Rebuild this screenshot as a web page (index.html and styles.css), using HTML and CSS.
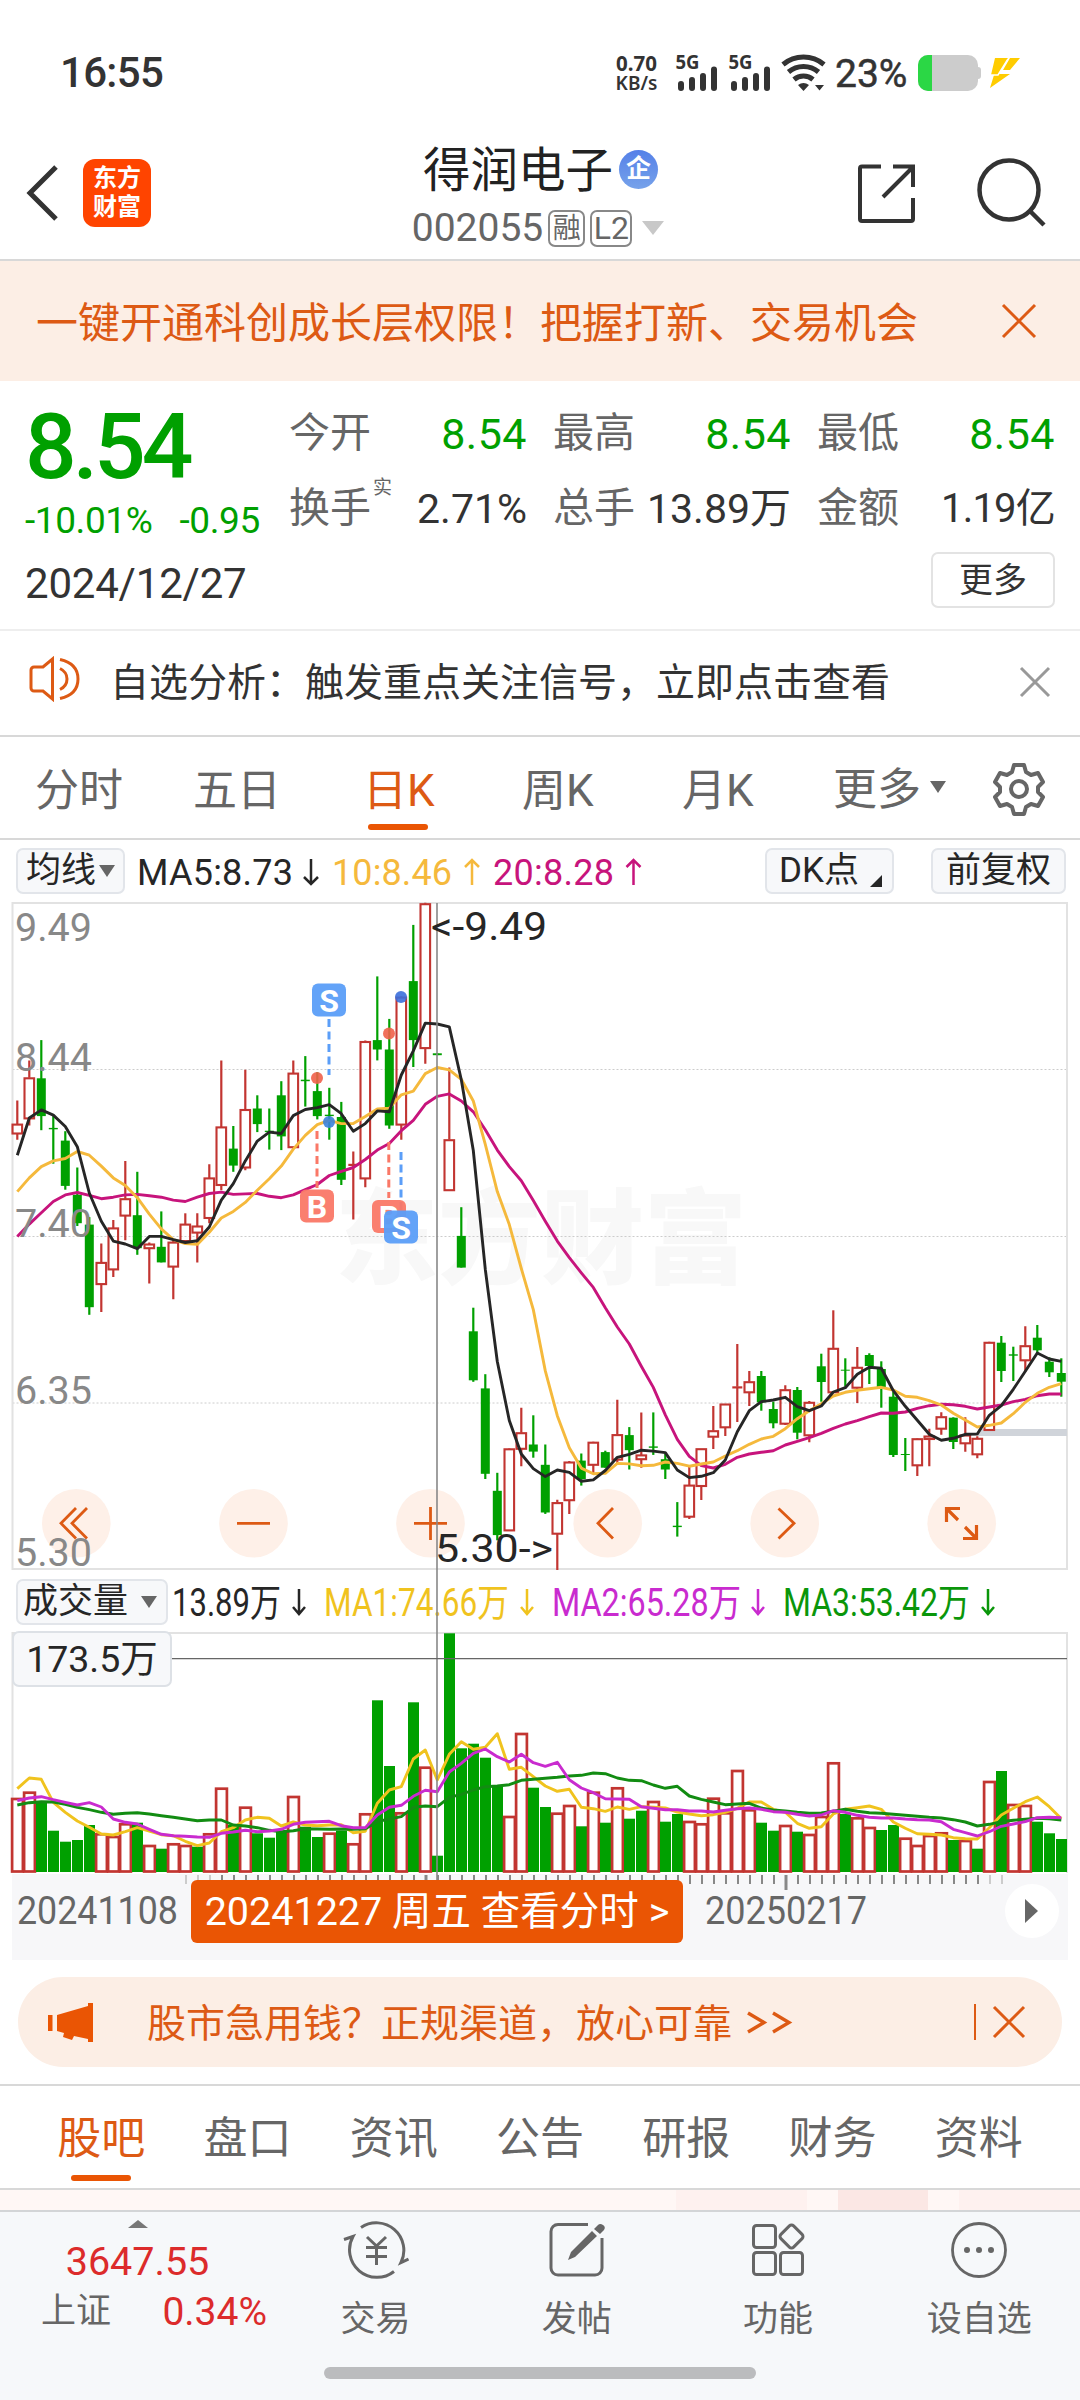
FILE: index.html
```html
<!DOCTYPE html>
<html lang="zh-CN">
<head>
<meta charset="utf-8">
<title>得润电子 002055</title>
<link rel="stylesheet" href="styles.css">
</head>
<body>
<div class="statusbar">
  <span class="clock">16:55</span>
  <div class="net-speed"><span>0.70</span><span>KB/s</span></div>
  <svg class="signals" width="96" height="48" viewBox="674 45 96 48">
    <g class="signal-label"><text x="675.500" y="69" textLength="24" lengthAdjust="spacingAndGlyphs">5G</text><text x="728.500" y="69" textLength="24" lengthAdjust="spacingAndGlyphs">5G</text></g>
    <g class="signal-bars"><path d="M681 84v4M692 80v8M703 76v12M714 69.500v18.500M734 84v4M745 80v8M756 76v12M767 69.500v18.500"/></g>
  </svg>
  <svg class="wifi" width="46" height="38" viewBox="780 54 46 38">
    <path d="M783 64.500a32 32 0 0 1 41 0M788.500 72a23 23 0 0 1 30 0M794 79.500a14.500 14.500 0 0 1 19 0" fill="none" stroke="#333" stroke-width="5"/>
    <path d="M798 85q5.500-4 11 0l-5.500 6zM815 85h9l-4.500 5.500z" fill="#333"/>
  </svg>
  <span class="battery-pct">23%</span>
  <svg class="battery" width="104" height="38" viewBox="917 54 104 38">
    <rect x="918" y="55" width="60" height="36" rx="10" fill="#ccc"/><path d="M978 67q3 0 3 3v6q0 3-3 3z" fill="#ccc"/>
    <path d="M932 55h-4a10 10 0 0 0-10 10v16a10 10 0 0 0 10 10h4z" fill="#2bd745"/>
    <path d="M995 58h13l-9 16h11l-20 14 4-13h-3zM1010 58h10l-10 12h-7z" fill="#fc0"/><path d="M1008 59 998 75h-7" fill="none" stroke="#fff" stroke-width="1.500"/>
  </svg>
</div>

<header class="header">
  <div class="header-left">
    <svg width="34" height="58" viewBox="0 0 34 58"><path d="M30 3 4 29 30 55" fill="none" stroke="#333" stroke-width="5"/></svg>
    <div class="logo"><span>东方</span><span>财富</span></div>
  </div>
  <div class="header-title">
    <div class="name-row"><span class="name">得润电子</span><span class="corp">企</span></div>
    <div class="code-row"><span class="code">002055</span><span class="tag">融</span><span class="tag tag-l2">L2</span><i class="caret"></i></div>
  </div>
  <div class="header-right">
    <svg width="60" height="60" viewBox="857 164 60 60"><path d="M881 166.500H862a2 2 0 0 0-2 2V219a2 2 0 0 0 2 2h49a2 2 0 0 0 2-2V198M893 166.500h20V187M912 168l-29 29" fill="none" stroke="#333" stroke-width="4"/></svg>
    <svg width="72" height="72" viewBox="976 157 72 72"><circle cx="1009" cy="190" r="29.500" fill="none" stroke="#333" stroke-width="4.500"/><path d="M1030 211l14 14" stroke="#333" stroke-width="4.500"/></svg>
  </div>
</header>

<div class="banner"><span>一键开通科创成长层权限！把握打新、交易机会</span>
  <svg width="36" height="36" viewBox="0 0 36 36"><path d="M2 2 34 34M34 2 2 34" stroke="#dd5a14" stroke-width="3"/></svg>
</div>

<section class="quote">
  <div class="quote-price">
    <div class="price">8.54</div>
    <div class="change"><span>-10.01%</span><span>-0.95</span></div>
  </div>
  <div class="quote-grid">
    <div class="cell"><label>今开</label><b class="down">8.54</b></div>
    <div class="cell"><label>最高</label><b class="down">8.54</b></div>
    <div class="cell"><label>最低</label><b class="down">8.54</b></div>
    <div class="cell"><label>换手<sup>实</sup></label><b>2.71%</b></div>
    <div class="cell"><label>总手</label><b>13.89万</b></div>
    <div class="cell"><label>金额</label><b class="amount">1.19亿</b></div>
  </div>
  <div class="quote-date">2024/12/27</div>
  <button class="more">更多</button>
</section>

<div class="notice">
  <svg width="54" height="46" viewBox="28 656 54 46"><path d="M52.500 659v40L43 691H34a3 3 0 0 1-3-3V670a3 3 0 0 1 3-3h9zM60 668.500q7 3.500 7 10.500t-7 10.500M60 659.500q18 4 18 19.500t-18 19.500" fill="none" stroke="#dd5a14" stroke-width="3"/></svg>
  <span>自选分析：触发重点关注信号，立即点击查看</span>
  <svg class="notice-close" width="32" height="32" viewBox="0 0 32 32"><path d="M2 2 30 30M30 2 2 30" stroke="#999" stroke-width="3"/></svg>
</div>

<nav class="period">
  <span>分时</span><span>五日</span><span class="active">日K</span><span>周K</span><span>月K</span>
  <span class="period-more">更多<i></i></span>
  <svg width="54" height="54" viewBox="0 0 54 54"><g fill="none" stroke="#666" stroke-width="4" stroke-linejoin="round"><path d="M22 3h10l2 7 5 3 7-2 5 9-5 5v5l5 5-5 9-7-2-5 3-2 7H22l-2-7-5-3-7 2-5-9 5-5v-5l-5-5 5-9 7 2 5-3z"/><circle cx="27" cy="27" r="8"/></g></svg>
</nav>

<div class="ma-row">
  <button class="chip chip-ma">均线<i></i></button>
  <svg class="ma-legend" width="625" height="48" viewBox="130 848 625 48">
    <text x="137" y="885" textLength="156">MA5:8.73</text><text class="ma10" x="332" y="885" textLength="120">10:8.46</text><text class="ma20" x="493" y="885" textLength="121">20:8.28</text>
    <g fill="none" stroke-width="2.500"><path d="M311 859v25M304 877l7 7 7-7" stroke="#262626"/><path d="M472 885v-25M465 867l7-7 7 7" stroke="#f5b93c"/><path d="M633.500 885v-25M626.500 867l7-7 7 7" stroke="#c7147c"/></g>
  </svg>
  <button class="chip chip-dk">DK点<i></i></button>
  <button class="chip chip-adj">前复权</button>
</div>

<section class="charts">
  <svg id="chart" width="1080" height="1064" viewBox="0 896 1080 1064"></svg>
  <button class="chip chip-vol">成交量<i></i></button>
  <span class="vol-value">173.5万</span>
  <button class="day-detail">20241227 周五 查看分时 &gt;</button>
</section>

<div class="promo">
  <svg width="46" height="40" viewBox="48 2001 46 40"><path d="M48 2014h4.500v16H48zM57 2014l31-9v-3h5v39h-5v-3l-14-3-2 4-9-3 1-4-7-2z" fill="#ea5504"/></svg>
  <span class="promo-text">股市急用钱？正规渠道，放心可靠</span>
  <svg class="promo-arrows" width="46" height="28" viewBox="0 0 46 28"><path d="M1 5 17 14.500 1 24M26 5 42 14.500 26 24" fill="none" stroke="#dd5a14" stroke-width="3.400"/></svg>
  <i class="promo-line"></i>
  <svg width="34" height="34" viewBox="0 0 34 34"><path d="M2 2 32 32M32 2 2 32" stroke="#dd5a14" stroke-width="3"/></svg>
</div>

<nav class="sections"><span class="active">股吧</span><span>盘口</span><span>资讯</span><span>公告</span><span>研报</span><span>财务</span><span>资料</span></nav>
<div class="feed-strip"><i></i><i></i><i></i></div>

<footer class="footer">
  <div class="toolbar">
    <div class="index">
      <i></i>
      <span class="index-value">3647.55</span>
      <div class="index-row"><span>上证</span><b>0.34%</b></div>
    </div>
    <div class="tool">
      <svg width="66" height="60" viewBox="342 2220 66 60"><g fill="none" stroke="#666" stroke-width="3"><path d="M360 2227.500A27.500 27.500 0 0 1 400 2262.500l7.500-3.500M393 2271.500A27.500 27.500 0 0 1 352 2236.500l-9 3"/><path d="M366 2237l9.500 9 9.500-9M375.500 2246v19M365 2247.500h21M365 2256.500h21"/></g></svg>
      <span>交易</span>
    </div>
    <div class="tool">
      <svg width="60" height="60" viewBox="547 2220 60 60"><path d="M588 2224.500h-30a7 7 0 0 0-7 7V2268a7 7 0 0 0 7 7h37a7 7 0 0 0 7-7v-30" fill="none" stroke="#666" stroke-width="3"/><path d="M592 2231l5 5-22 21-7 3 3-8zM594 2229l4-4q2-2 5 0t1 5l-4 4z" fill="#666"/></svg>
      <span>发帖</span>
    </div>
    <div class="tool">
      <svg width="60" height="60" viewBox="748 2220 60 60"><g fill="none" stroke="#666" stroke-width="3"><rect x="753.500" y="2225.500" width="22" height="22" rx="3"/><rect x="753.500" y="2252.500" width="22" height="22" rx="3"/><rect x="780.500" y="2252.500" width="22" height="22" rx="3"/><rect x="782.500" y="2227.500" width="18" height="18" rx="3" transform="rotate(45 791.500 2236.500)"/></g></svg>
      <span>功能</span>
    </div>
    <div class="tool">
      <svg width="60" height="60" viewBox="949 2220 60 60"><circle cx="979" cy="2250" r="26.500" fill="none" stroke="#666" stroke-width="2.800"/><g fill="#666"><circle cx="967" cy="2250" r="3"/><circle cx="979" cy="2250" r="3"/><circle cx="991" cy="2250" r="3"/></g></svg>
      <span>设自选</span>
    </div>
  </div>
  <div class="home-bar"></div>
</footer>
<script src="chart.js"></script>
</body>
</html>
```
FILE: styles.css
```css
* { box-sizing: border-box; }
body { margin: 0; width: 1080px; height: 2400px; overflow: hidden; background: #fff; color: #333; font-family: Roboto, "Noto Sans CJK SC", sans-serif; }
svg { display: block; flex: none; }
button { margin: 0; padding: 0; font-family: inherit; color: inherit; }
span, b, label { white-space: nowrap; font-weight: 400; }

.statusbar { height: 130px; padding: 0 59px 0 60px; display: flex; align-items: flex-start; }
.clock { font-size: 42px; font-weight: 500; line-height: 50px; margin-top: 48px; width: 552px; letter-spacing: -.7px; }
.net-speed { margin-top: 53px; width: 49px; display: flex; flex-direction: column; align-items: center; font-size: 20.500px; line-height: 20px; font-family: "Noto Sans", sans-serif; }
.net-speed span { font-weight: 700; }
.net-speed span:last-child { font-size: 19px; font-weight: 600; }
.signals { margin: 45px 0 0 13px; }
.signal-label { font: 700 19px "Noto Sans", sans-serif; fill: #333; }
.signal-bars { stroke: #333; stroke-width: 6; stroke-linecap: round; }
.wifi { margin: 54px 0 0 10px; }
.battery-pct { font-size: 39px; font-weight: 400; -webkit-text-stroke: .5px #333; line-height: 44px; margin: 52px 0 0 9px; width: 82px; }
.battery { margin-top: 54px; }

.header { height: 131px; padding: 0 32px 0 26px; border-bottom: 2px solid #d8d8d8; display: grid; grid-template-columns: 1fr auto 1fr; }
.header-left { display: flex; align-items: flex-start; padding-top: 29px; }
.header-left svg { margin-top: 5px; }
.logo { width: 68px; height: 68px; margin-left: 23px; border-radius: 12px; background: #ff4400; color: #fff; display: flex; flex-direction: column; align-items: center; justify-content: center; }
.logo span { font-size: 24px; line-height: 29px; font-weight: 700; }
.header-title { display: flex; flex-direction: column; align-items: center; padding: 11px 0 0 7px; }
.name-row { display: flex; align-items: center; height: 56px; color: #222; }
.name { font-size: 47.500px; line-height: 56px; padding-top: 3px; }
.corp { width: 39px; height: 39px; margin-left: 6px; border-radius: 50%; background: linear-gradient(#5580e8, #76a2ea); color: #fff; font-size: 25px; font-weight: 700; line-height: 38px; text-align: center; }
.code-row { display: flex; align-items: center; height: 40px; margin-top: 11px; margin-left: -5px; color: #666; }
.code { font-size: 39px; line-height: 40px; }
.tag { height: 37px; width: 37px; margin-left: 5px; border: 2px solid #888; border-radius: 7px; font-size: 28px; line-height: 33px; text-align: center; }
.tag-l2 { width: 42px; font-size: 32px; }
.caret { margin-left: 10px; border: 11px solid transparent; border-top: 14px solid #c8c8c8; border-bottom: 0; }
.header-right { display: flex; justify-content: flex-end; padding-top: 27px; gap: 59px; }
.header-right svg:first-child { margin-top: 7px; }

.banner { height: 120px; padding: 0 43px 0 36px; background: #fceee5; color: #dd5a14; display: flex; align-items: center; justify-content: space-between; font-size: 42px; }
.banner span { padding-bottom: 3px; }

.quote { height: 250px; padding: 26px 25px 0 25px; border-bottom: 2px solid #eee; display: grid; grid-template-columns: 264px 766px; grid-template-rows: 144px 68px; }
.price { font-size: 91px; line-height: 76px; margin-top: 2px; font-weight: 500; color: #00a000; letter-spacing: -4px; }
.change { display: flex; gap: 27px; font-size: 37px; line-height: 44px; margin-top: 14px; color: #00a000; letter-spacing: -.4px; }
.quote-grid { display: grid; grid-template-columns: repeat(3, 238px); column-gap: 26px; grid-template-rows: 52px 52px; row-gap: 23px; }
.cell { display: flex; justify-content: space-between; align-items: center; font-size: 41px; line-height: 52px; }
.cell label { color: #666; position: relative; }
.cell sup { position: absolute; left: 84px; top: -8px; font-size: 19px; line-height: 28px; }
.cell b { font-size: 41px; letter-spacing: 0; padding-top: 2px; }
.cell .down { color: #00a000; font-size: 43px; letter-spacing: .5px; }
.cell .amount { font-size: 40px; letter-spacing: -.8px; }
.quote-date { font-size: 42px; line-height: 50px; margin-top: 8px; letter-spacing: -.2px; }
.more { justify-self: end; width: 124px; height: 56px; margin-top: 1px; border: 2px solid #e3e3e3; border-radius: 7px; background: #fff; font-size: 34px; line-height: 50px; }

.notice { height: 106px; padding: 0 29px 8px 28px; border-bottom: 2px solid #d8d8d8; display: flex; align-items: center; font-size: 39px; }
.notice span { margin-left: 28px; flex: 1; }
.notice-close { margin-top: 6px; }

.period { height: 103px; padding: 0 34px 0 35px; border-bottom: 2px solid #d8d8d8; display: grid; grid-template-columns: 158px 158px 160px 159px 151px 1fr 54px; align-items: center; font-size: 44px; line-height: 101px; color: #666; }
.period span { padding-top: 4px; height: 101px; line-height: 100px; }
.period svg { margin-top: 2px; }
.period .active, .sections .active { color: #dd5a14; position: relative; }
.period .active::after { content: ""; position: absolute; left: 17px; bottom: 8px; width: 60px; height: 6px; border-radius: 3px; background: #ea5504; }
.period span:nth-child(3) { padding-left: 12px; }
.period span:nth-child(4) { padding-left: 11px; }
.period span:nth-child(5) { padding-left: 12px; }
.period span.period-more { display: flex; align-items: center; padding-left: 12px; }
.period-more i { margin-left: 9px; margin-bottom: 6px; border: 8px solid transparent; border-top: 12px solid #666; border-bottom: 0; }

.ma-row { height: 56px; padding: 8px 14px 0 16px; display: flex; align-items: flex-start; }
.chip { height: 46px; border: 2px solid #e2e5ea; border-radius: 7px; background: #f7f8fa; color: #262626; font-size: 35px; line-height: 40px; display: flex; align-items: center; }
.chip i { border: 8px solid transparent; border-top: 12px solid #666; border-bottom: 0; }
.chip-ma { width: 109px; padding-left: 8px; }
.chip-ma i { margin-left: 3px; }
.ma-legend { margin-left: 5px; font-size: 36px; fill: #262626; }
.ma10 { fill: #f5b93c; }
.ma20 { fill: #c7147c; }
.chip-dk { width: 129px; margin-left: 10px; padding-left: 12px; }
.chip-dk i { border: 0; border-left: 12px solid transparent; border-bottom: 12px solid #262626; margin: 20px 0 0 11px; }
.chip-adj { width: 135px; margin-left: auto; justify-content: center; }

.charts { position: relative; height: 1064px; }
.charts svg { font-size: 38px; }
.chip-vol { position: absolute; left: 16px; top: 683px; width: 152px; padding-left: 5px; }
.chip-vol i { margin-left: 13px; }
.vol-value { position: absolute; left: 12px; top: 735px; width: 160px; height: 56px; border: 2px solid #dde1e6; border-radius: 7px; background: #f7f8fa; color: #262626; font-size: 37.500px; line-height: 52px; text-align: center; }
.day-detail { position: absolute; left: 191px; top: 984px; width: 492px; height: 63px; border: 0; border-radius: 6px; background: #ea5504; color: #fff; font-size: 39.500px; line-height: 62px; white-space: nowrap; }
.watermark { font-weight: 900; font-size: 103px; fill: #f8f8f8; }
.axis-label { fill: #888; }
.note { fill: #262626; }
.mark { font-size: 32px; font-weight: 700; fill: #fff; text-anchor: middle; }

.promo { height: 90px; margin: 17px 18px 0; padding: 0 36px 0 30px; border-radius: 45px; background: #fceee5; color: #dd5a14; display: flex; align-items: center; }
.promo-text { margin-left: 53px; font-size: 39px; padding-bottom: 4px; }
.promo-arrows { margin-left: 15px; }
.promo-line { width: 2px; height: 36px; background: #dd5a14; margin-left: auto; margin-right: 16px; }

.sections { height: 106px; margin-top: 17px; padding: 0 28px; border-top: 2px solid #d8d8d8; border-bottom: 2px solid #d8d8d8; display: grid; grid-template-columns: repeat(7, 1fr); font-size: 44px; line-height: 107px; text-align: center; color: #666; }
.sections .active::after { content: ""; position: absolute; left: 43px; top: 89px; width: 60px; height: 6px; border-radius: 3px; background: #ea5504; }
.feed-strip { height: 20px; padding-left: 676px; background: #fff7f5; display: flex; }
.feed-strip i { width: 131px; background: #fef1ef; margin-right: 31px; }
.feed-strip i:nth-child(2) { width: 90px; background: #fbe7e4; }
.feed-strip i:nth-child(3) { width: 121px; margin: 0; }

.footer { height: 190px; border-top: 2px solid #d3d5d7; background: #f6f8fa; }
.toolbar { height: 155px; display: grid; grid-template-columns: 275px repeat(4, 201.250px); }
.index { display: flex; flex-direction: column; align-items: center; color: #dc2b2b; }
.index i { margin-top: 8px; border: 10px solid transparent; border-bottom: 8px solid #777; border-top: 0; }
.index-value { font-size: 39.500px; line-height: 46px; margin-top: 11px; }
.index-row { width: 275px; padding: 0 8px 0 41px; display: flex; justify-content: space-between; font-size: 39px; line-height: 50px; margin-top: 2px; }
.index-row span { font-size: 35px; color: #666; }
.tool { display: flex; flex-direction: column; align-items: center; color: #666; font-size: 35px; line-height: 50px; }
.tool svg { margin: 8px 0 15px; }
.home-bar { width: 432px; height: 12px; margin: 0 auto; border-radius: 6px; background: #bbbcbe; }
```
FILE: chart.js
```js
// Daily K-line and volume panels. One candle every 12 units, starting at x = 17.3.
const RED = '#c23531', GREEN = '#00a000';
const X = i => +(17.3 + 12 * i).toFixed(1);
const scale = (top, ratio) => v => +(top + v / ratio).toFixed(1);
const early = scale(840, 2.119), late = scale(1200, 3), volume = scale(1560, 3);
const SPLIT = 57;
const priceY = (v, i) => (i < SPLIT ? early : late)(v);

// direction, high, body top, body bottom, low
const candles = `r552,602,622,635 r467,504,590,605 g424,505,585,615 g585,610,613,686 g617,637,733,741 g694,752,812,818 g799,815,990,1006 r855,895,941,1000 r805,822,910,926 r680,760,796,848
g703,795,865,879 r853,856,865,940 g787,862,895,895 r850,852,904,973 r791,814,850,850 r791,818,832,895 r687,716,801,812 r467,608,731,742 g606,654,690,703 r487,571,694,700
g541,569,602,619 g569,616,619,656 g511,541,628,657 r467,494,651,655 g458,508,511,565 g492,532,585,592 g525,582,585,635 g555,587,720,731 r660,687,690,804 r425,427,717,736
g289,424,444,467 g379,444,605,612 r331,333,603,635 g180,299,424,481 r133,135,441,474 g452,452,456,456 r482,635,742,742 g778,839,906,906 g991,1041,1145,1148 g1132,1162,1343,1354
g1341,1379,1473,1484 r1289,1290,1463,1463 r1203,1256,1290,1327 g1219,1281,1296,1309 g1281,1324,1425,1428 r1398,1404,1470,1547 r1316,1318,1399,1428 g1300,1315,1354,1368 r1275,1276,1324,1343 g1294,1297,1330,1330
r1186,1260,1313,1320 g1244,1261,1293,1334 r1213,1303,1312,1330 g1213,1285,1288,1303 g1300,1312,1334,1354 g1403,1453,1456,1476 r1327,1367,1434,1439 r746,746,858,900 r618,692,710,747 r612,612,682,708
r432,560,563,666 r513,545,577,618 g513,528,607,632 g605,627,670,685 r556,569,671,675 g561,570,698,718 r603,607,706,727 g461,499,546,605 r331,445,577,577 g475,509,512,560
r441,502,563,609 g460,465,498,552 g484,507,562,623 g575,590,765,771 g714,762,765,813 r715,716,796,828 r686,708,717,799 r637,650,686,704 g652,653,726,747 r652,705,730,755
r709,715,763,775 r425,427,690,693 g408,428,513,546 g440,463,467,543 r379,437,481,515 g375,413,451,460 g472,485,517,531 g475,519,545,590`.split(/\s+/);

const ma5 = [668,589,572,583,607,650,748,808,850,856,866,840,840,847,853,849,820,763,728,680,638,619,622,584,571,567,561,580,617,601,574,576,498,447,388,390,396,508,658,910,1105,1230,1301,1332,1349,1335,1340,1359,1356,1336,1308,1302,1293,1295,1298,1335,1351,829,818,780,695,632,605,600,592,620,632,618,576,563,523,502,505,572,619,661,703,721,715,703,702,646,617,568,514,459,477,484];
const ma10 = [745,716,692,680,675,660,668,691,716,732,758,793,824,847,855,857,831,801,787,768,742,718,691,655,626,603,594,601,601,586,570,568,540,532,495,482,487,507,553,645,745,815,908,995,1125,1220,1288,1331,1343,1342,1321,1322,1326,1325,1318,1321,1327,792,786,768,752,733,717,709,686,656,632,611,588,577,571,566,562,570,589,592,602,615,640,660,681,676,669,641,607,580,562,551];
const ma20 = [840,814,790,766,752,747,753,760,757,752,751,754,757,763,766,757,749,746,751,750,749,755,758,752,741,730,711,702,694,677,657,643,616,594,560,543,538,553,576,614,657,692,722,764,808,850,885,917,948,991,1032,1068,1115,1160,1218,1270,1306,797,804,793,772,762,757,752,735,724,713,700,685,672,662,650,639,640,636,625,617,613,614,619,627,621,615,605,598,587,582,582];

const volumes = 'r714 r695 g726 g812 g845 g840 g795 r820 r828 r790 g788 r855 g866 r850 r855 g860 r820 r683 g795 r740 g820 g833 g815 r708 g800 g831 r818 g812 r850 r760 g421 g618 r757 g427 r620 g887 g220 g565 g551 g593 g676 r768 r519 g683 g741 r758 r735 g799 r695 g788 r682 g776 g752 r723 g785 g762 r783 r790 r713 r757 r630 r748 g788 g812 r795 g815 r822 r768 r607 g762 r772 r801 g810 g795 r833 r855 r825 r817 g840 r840 g866 r663 g633 r732 r735 g785 g820 g837'.split(' ');
const volMa1 = [686,654,658,727,757,783,802,822,825,815,803,813,824,827,844,857,849,815,803,780,772,775,798,786,795,797,795,794,818,814,730,690,680,597,570,660,583,545,568,562,521,628,622,650,678,694,688,742,746,754,741,748,740,742,744,756,762,767,764,757,745,726,726,748,757,790,805,800,762,748,743,738,748,786,805,821,823,825,833,836,837,803,765,745,725,711,740,776];
const volMa2 = [722,714,710,719,727,735,728,741,777,787,792,808,823,827,829,831,832,820,816,811,815,813,808,793,787,785,784,797,803,803,765,742,736,709,691,695,636,610,580,567,590,606,583,608,619,607,659,684,698,716,717,718,740,745,749,749,753,753,756,751,746,744,748,755,757,763,768,765,752,757,766,772,774,774,777,779,780,785,808,818,828,815,799,792,785,773,772,773];
const volMa3 = [735,728,725,726,733,742,749,757,763,760,758,762,767,772,777,782,780,780,795,798,803,811,815,812,806,807,808,807,808,806,785,777,770,742,738,740,712,703,690,680,678,674,661,658,655,652,648,646,639,641,654,661,662,675,685,679,708,718,726,734,732,730,744,750,753,757,760,759,754,748,754,758,760,763,766,769,772,774,779,786,798,793,785,781,778,775,776,780];

const line = (data, y, color) => `<polyline fill="none" stroke="${color}" stroke-width="2.9" stroke-linejoin="round" points="${data.map((v, i) => X(i) + ',' + y(v, i)).join(' ')}"/>`;
const path = (d, color, w = 2.2, extra = '') => `<path d="${d}" fill="none" stroke="${color}" stroke-width="${w}" ${extra}/>`;
const rect = (x, y, w, h, attrs) => `<rect x="${x}" y="${y}" width="${w}" height="${Math.max(h, 0)}" ${attrs}/>`;
const text = (cls, x, y, len, s, fill = '') => `<text class="${cls}" x="${x}" y="${y}" textLength="${len}" lengthAdjust="spacingAndGlyphs" ${fill && `fill="${fill}"`}>${s}</text>`;

function drawCandle(item, i) {
  const [high, top, bottom, low] = item.slice(1).split(',').map(v => priceY(+v, i));
  const x = X(i);
  if (item[0] === 'g') {
    return path(`M${x} ${high}V${low}`, GREEN) + rect(x - 4.5, top, 9, bottom - top, `fill="${GREEN}"`);
  }
  const body = bottom - top < 2.5
    ? path(`M${x - 5} ${top + 0.7}h10`, RED)
    : rect(x - 4.8, top + 0.5, 9.6, bottom - top - 0.5, `fill="none" stroke="${RED}" stroke-width="2.1"`);
  return path(`M${x} ${high}V${top}M${x} ${bottom}V${low}`, RED) + body;
}

function drawVolume(item, i) {
  const y = volume(+item.slice(1)), x = X(i);
  return item[0] === 'g'
    ? rect(x - 5.3, y, 11, 1872 - y, `fill="${GREEN}"`)
    : rect(x - 5.2, y + 1, 10.8, 1870.5 - y, `fill="#fff" stroke="${RED}" stroke-width="2.7"`);
}

function marker(x, y, letter, color) {
  return rect(x - 17, y, 34, 33, `rx="6" fill="${color}" fill-opacity=".95"`) + `<text class="mark" x="${x}" y="${y + 28}">${letter}</text>`;
}

const BLUE = '#5b9ef8', CORAL = '#fa7867', ORANGE = '#dd5a14', dash = 'stroke-dasharray="8 4.5"';
let out = '';

out += text('watermark', 335, 1276, 412, '东方财富');
out += path('M12.500 1069.500H1067M12.500 1236.500H1067M12.500 1403H1067', '#ccc', 1, 'stroke-dasharray="2 2"');
out += rect(12.5, 903, 1054.500, 666, 'fill="none" stroke="#e2e2e2" stroke-width="2"');
out += rect(978, 1429, 89, 7, 'fill="#d0d4da"');
out += candles.map(drawCandle).join('');

for (const cx of [76.3, 253.5, 430.5, 607.700, 784.700, 961.700]) out += `<circle cx="${cx}" cy="1523.300" r="34.300" fill="#fef0e8"/>`;
out += path('M76 1508 61 1523.300 76 1538.500M87 1508 72 1523.300 87 1538.500M237 1523.300h33M414 1523.300h33M430.500 1507v33M613 1508 598 1523.300 613 1538.500M778.500 1508.500 794 1523.300 778.500 1538.500', ORANGE, 2.8);
out += path('M960 1508.500H946.500V1522M947 1509 958 1520M963 1538.500H976.500V1525M976 1538 965 1527', ORANGE, 3.2);

out += line(ma20, priceY, '#c7147c') + line(ma10, priceY, '#f5b93c') + line(ma5, priceY, '#262626');

[['9.49', 941], ['8.44', 1071], ['7.40', 1237], ['6.35', 1404], ['5.30', 1566]].forEach(([s, y]) => { out += text('axis-label', 15, y, 77, s); });

out += path('M329 1019V1075', BLUE, 3, dash) + marker(329, 983.5, 'S', BLUE);
out += path('M317 1131V1188', CORAL, 3, dash) + marker(317, 1189.5, 'B', CORAL);
out += path('M388.800 1142V1198', CORAL, 3, dash) + path('M401 1152V1210', BLUE, 3, dash);
out += marker(389, 1200, 'B', CORAL) + marker(401, 1210.5, 'S', BLUE);
for (const [x, y, c] of [[317, 1078, '#f0604a'], [389, 1033.5, '#f0604a'], [329, 1122, '#3b82dc'], [401, 997, '#3b6fdc']]) out += `<circle cx="${x}" cy="${y}" r="6" fill="${c}" fill-opacity=".9"/>`;

// Volume panel
out += path('M12.500 1873V1633H1067V1873', '#e2e2e2', 2);
out += volumes.map(drawVolume).join('');
out += line(volMa1, volume, '#f0c31e') + line(volMa3, volume, '#128c12') + line(volMa2, volume, '#c92bcf');
const arrow = (x, c) => path(`M${x} 1589V1614M${x - 6} 1607l6 7 6-7`, c, 2.5);
out += text('', 172, 1616, 109, '13.89万', '#262626') + arrow(299, '#262626');
out += text('', 324, 1616, 185, 'MA1:74.66万', '#f0c31e') + arrow(527, '#f0c31e');
out += text('', 552, 1616, 189, 'MA2:65.28万', '#c92bcf') + arrow(758, '#c92bcf');
out += text('', 783, 1616, 187, 'MA3:53.42万', '#0a960a') + arrow(988, '#0a960a');

// Time axis
out += rect(12, 1874, 1056, 86, 'fill="#f7f7f9"');
for (let i = 14; i <= 82; i++) {
  const major = i === 64, faded = i < 17 || i > 80;
  out += path(`M${X(i) + .7} 1875v${major ? 15 : 9}`, faded ? '#ccc' : '#888', major || i === 34 ? 3 : 2);
}
out += text('', 17, 1924, 161, '20241108', '#666') + text('', 705, 1924, 162, '20250217', '#666');
out += '<circle cx="1032" cy="1911" r="27" fill="#fff"/><path d="M1025 1899v24l13-12z" fill="#666"/>';

// Crosshair
out += path('M437 903V1880', '#888', 1.6) + path('M171 1658.600H1067', '#666', 1.4);
out += text('note', 431, 940, 116, '&lt;-9.49') + text('note', 435, 1562, 118, '5.30-&gt;');

document.getElementById('chart').innerHTML = out;
```
